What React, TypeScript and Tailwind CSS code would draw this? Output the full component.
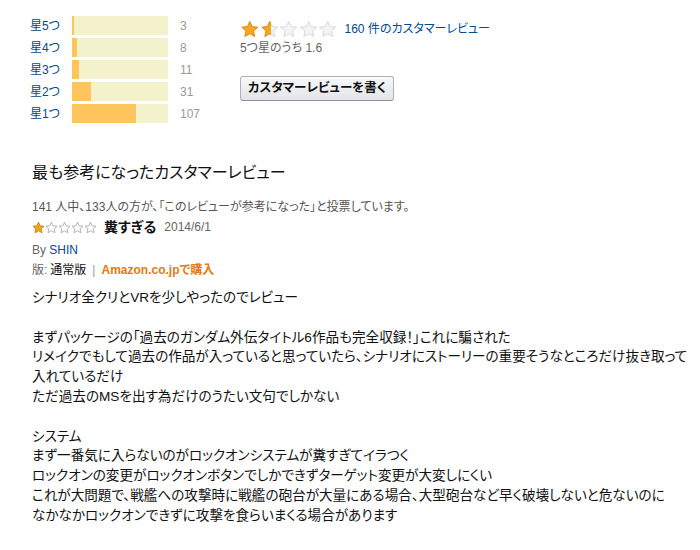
import type { ReactNode } from 'react'

const STAR = 'M12 1.8l3.05 6.55 7.15.82-5.3 4.9 1.45 7.08L12 17.6l-6.35 3.55 1.45-7.08-5.3-4.9 7.15-.82z'

const bars = [
  { label: '星5つ', count: 3 },
  { label: '星4つ', count: 8 },
  { label: '星3つ', count: 11 },
  { label: '星2つ', count: 31 },
  { label: '星1つ', count: 107 },
]
const total = 160

function BigStar({ fill, id }: { fill: number; id: string }) {
  return (
    <svg width="19.5" height="18" viewBox="0 0 24 23">
      <defs>
        <linearGradient id={`g-${id}`} x1="0" y1="0" x2="1" y2="0">
          <stop offset={fill} stopColor="#f6a623" />
          <stop offset={fill} stopColor="#f4f4f4" />
        </linearGradient>
        <linearGradient id={`s-${id}`} x1="0" y1="0" x2="1" y2="0">
          <stop offset={fill} stopColor="#d48a10" />
          <stop offset={fill} stopColor="#d6d6d6" />
        </linearGradient>
      </defs>
      <path d={STAR} fill={`url(#g-${id})`} stroke={`url(#s-${id})`} strokeWidth="1.2" strokeLinejoin="round" />
    </svg>
  )
}

function SmallStar({ on }: { on: boolean }) {
  return (
    <svg width="13" height="13" viewBox="0 0 24 23">
      <path
        d={STAR}
        fill={on ? '#f3a221' : '#ffffff'}
        stroke={on ? '#c98010' : '#a8a8a8'}
        strokeWidth="1.6"
        strokeLinejoin="round"
      />
    </svg>
  )
}

function Line({ children }: { children?: ReactNode }) {
  return <div className="h-[19.8px] whitespace-nowrap">{children}</div>
}

export default function App() {
  return (
    <div className="relative h-[550px] w-[700px] overflow-hidden bg-white font-['Liberation_Sans','Noto_Sans_CJK_JP',sans-serif] text-[#111] [font-feature-settings:'palt']">
      <div className="flex pl-[30px] pt-[16px]">
        <div className="flex w-[180px] flex-col gap-[3px]">
          {bars.map((b) => (
            <div key={b.label} className="flex h-[19px] items-center text-[12px]">
              <span className="w-[42px] text-[#004b91]">{b.label}</span>
              <div className="h-[19px] w-[96px] bg-[#f3f2cd]">
                <div className="h-full bg-[#fec45d]" style={{ width: `${Math.max(2, (b.count / total) * 96)}px` }} />
              </div>
              <span className="ml-[12px] text-[#999]">{b.count}</span>
            </div>
          ))}
        </div>

        <div className="ml-[30px] flex flex-col pt-[3px]">
          <div className="flex h-[20px] items-center">
            <div className="flex">
              <BigStar fill={1} id="a" />
              <BigStar fill={0.55} id="b" />
              <BigStar fill={0} id="c" />
              <BigStar fill={0} id="d" />
              <BigStar fill={0} id="e" />
            </div>
            <span className="ml-[7px] text-[12px] text-[#004b91]">160 件のカスタマーレビュー</span>
          </div>
          <div className="mt-[1px] text-[12px] leading-[16px] text-[#666]">5つ星のうち 1.6</div>
          <button className="mt-[20px] h-[25px] w-[154px] rounded-[3px] border border-[#adb1b8] border-b-[#8d9096] bg-gradient-to-b from-[#f7f8fa] to-[#e2e4e8] text-[12.5px] font-bold text-[#111] shadow-[0_1px_0_rgba(255,255,255,0.6)_inset]">
            カスタマーレビューを書く
          </button>
        </div>
      </div>

      <div className="pl-[32px]">
        <h2 className="mt-[38px] h-[24px] text-[16px] leading-[24px] font-normal text-[#111]">
          最も参考になったカスタマーレビュー
        </h2>
        <div className="mt-[14px] h-[16px] text-[12px] leading-[16px] text-[#555]">
          141 人中、133人の方が、「このレビューが参考になった」と投票しています。
        </div>
        <div className="mt-[2px] flex h-[20px] items-center">
          <div className="flex">
            <SmallStar on />
            <SmallStar on={false} />
            <SmallStar on={false} />
            <SmallStar on={false} />
            <SmallStar on={false} />
          </div>
          <span className="ml-[7px] text-[14px] font-bold text-[#111]">糞すぎる</span>
          <span className="ml-[8px] text-[12px] text-[#666]">2014/6/1</span>
        </div>
        <div className="mt-[4px] flex h-[18px] items-center text-[12px] text-[#666]">
          By&nbsp;<span className="text-[#004b91]">SHIN</span>
        </div>
        <div className="mt-[2px] flex h-[18px] items-center text-[12px]">
          <span className="text-[#666]">版:</span>
          <span className="ml-[3px] text-[#111]">通常版</span>
          <span className="mx-[6px] text-[#999]">|</span>
          <span className="font-bold text-[#e47911]">Amazon.co.jpで購入</span>
        </div>
        <div className="mt-[9px] text-[13.6px] leading-[19.8px] text-[#111]">
          <Line>シナリオ全クリとVRを少しやったのでレビュー</Line>
          <Line />
          <Line>まずパッケージの「過去のガンダム外伝タイトル6作品も完全収録！」これに騙された</Line>
          <Line>リメイクでもして過去の作品が入っていると思っていたら、シナリオにストーリーの重要そうなところだけ抜き取って</Line>
          <Line>入れているだけ</Line>
          <Line>ただ過去のMSを出す為だけのうたい文句でしかない</Line>
          <Line />
          <Line>システム</Line>
          <Line>まず一番気に入らないのがロックオンシステムが糞すぎてイラつく</Line>
          <Line>ロックオンの変更がロックオンボタンでしかできずターゲット変更が大変しにくい</Line>
          <Line>これが大問題で、戦艦への攻撃時に戦艦の砲台が大量にある場合、大型砲台など早く破壊しないと危ないのに</Line>
          <Line>なかなかロックオンできずに攻撃を食らいまくる場合があります</Line>
        </div>
      </div>
    </div>
  )
}
